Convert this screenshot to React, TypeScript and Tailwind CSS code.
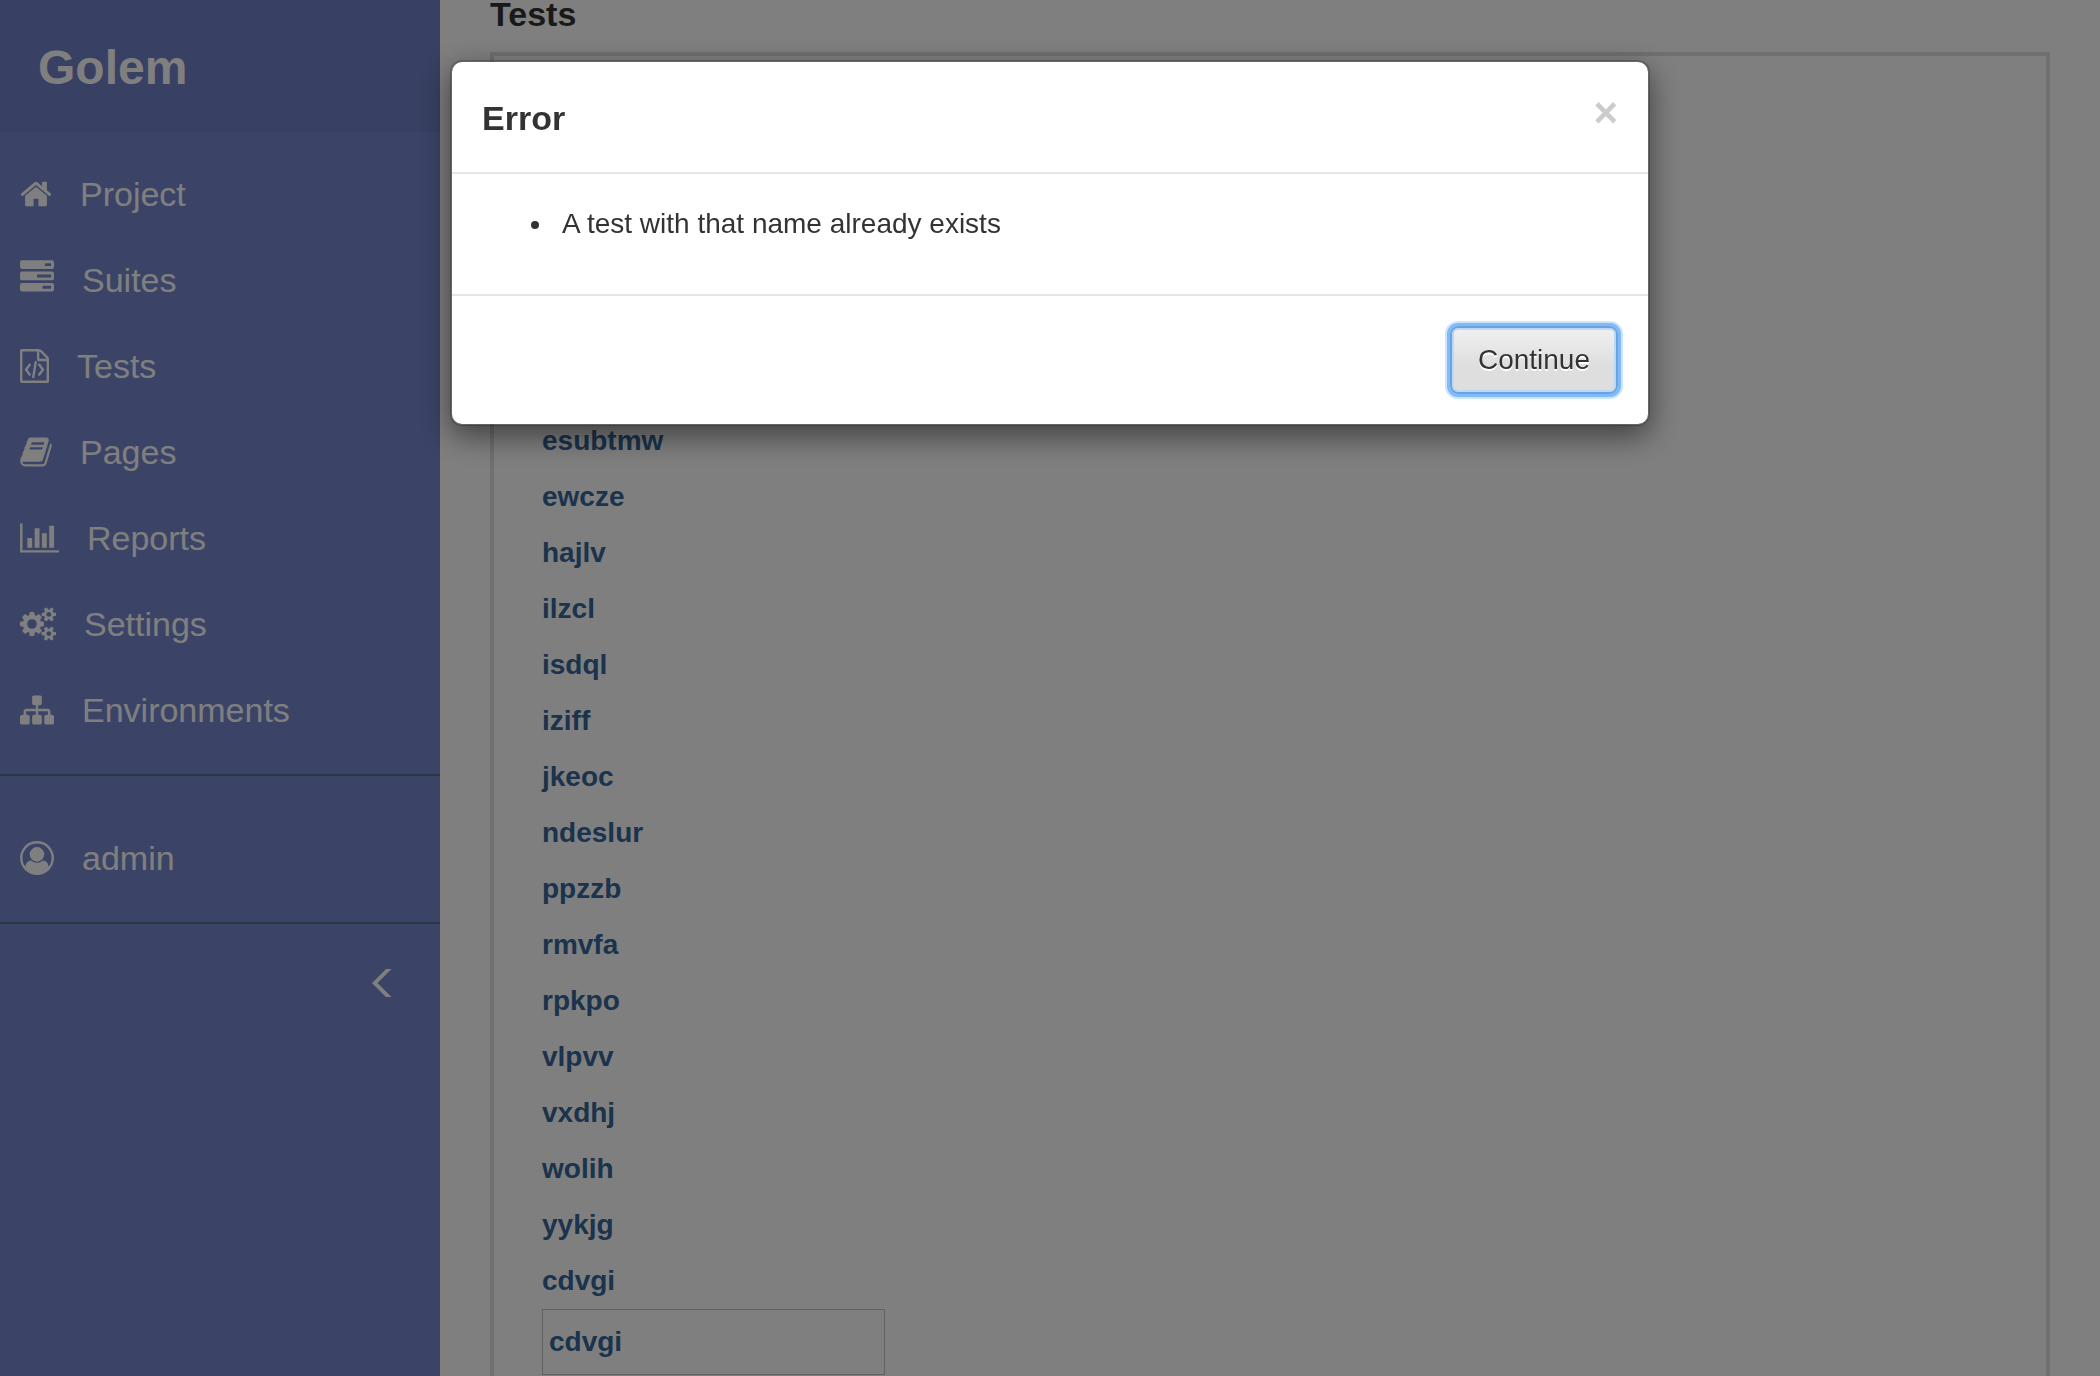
import React from "react";

type Glyph = { box: string; width: string; d: string };

const glyphs: Record<string, Glyph> = {
  home: {
    box: "64 0 1664 1792",
    width: "w-8",
    d: "M1472 992v480q0 26-19 45t-45 19h-384v-384h-256v384h-384q-26 0-45-19t-19-45v-480q0-1 .5-3t.5-3l575-474 575 474q1 2 1 6zm223-69l-62 74q-8 9-21 11h-3q-13 0-21-7l-692-577-692 577q-12 8-24 7-13-2-21-11l-62-74q-8-10-7-23.5t11-21.5l719-599q32-26 76-26t76 26l244 204v-195q0-14 9-23t23-9h192q14 0 23 9t9 23v408l219 182q10 8 11 21.5t-7 23.5z",
  },
  tasks: {
    box: "0 0 34 34",
    width: "w-[34px]",
    d: "M2-2.7h30a2 2 0 0 1 2 2v4.700a2 2 0 0 1-2 2h-30a2 2 0 0 1-2-2v-4.700a2 2 0 0 1 2-2zM25 .2v2.900h6v-2.900zM2 8.600h30a2 2 0 0 1 2 2v4.700a2 2 0 0 1-2 2h-30a2 2 0 0 1-2-2v-4.700a2 2 0 0 1 2-2zM17 11.500v2.900h14v-2.900zM2 19.900h30a2 2 0 0 1 2 2v4.700a2 2 0 0 1-2 2h-30a2 2 0 0 1-2-2v-4.700a2 2 0 0 1 2-2zM22.500 22.800v2.900h8.500v-2.900z",
  },
  code: {
    box: "0 0 1536 1792",
    width: "w-[29px]",
    d: "M1468 380q28 28 48 76t20 88v1152q0 40-28 68t-68 28h-1344q-40 0-68-28t-28-68v-1600q0-40 28-68t68-28h896q40 0 88 20t76 48zm-444-244v376h376q-10-29-22-41l-313-313q-12-12-41-22zm384 1528v-1024h-416q-40 0-68-28t-28-68v-416h-768v1536h1280zM480 768q8-11 21-12.5t24 6.5l51 38q11 8 12.5 21t-6.5 24l-182 243 182 243q8 11 6.5 24t-12.5 21l-51 38q-11 8-24 6.5t-21-12.5l-226-301q-14-19 0-38zm802 301q14 19 0 38l-226 301q-8 11-21 12.5t-24-6.5l-51-38q-11-8-12.5-21t6.5-24l182-243-182-243q-8-11-6.5-24t12.5-21l51-38q11-8 24-6.5t21 12.5zm-620 461q-13-2-20.5-13t-5.5-24l138-831q2-13 13-20.5t24-5.5l63 10q13 2 20.5 13t5.5 24l-138 831q-2 13-13 20.5t-24 5.5z",
  },
  book: {
    box: "64 0 1664 1792",
    width: "w-8",
    d: "M1703 478q40 57 18 129l-275 906q-19 64-76.5 107.5t-122.5 43.5h-923q-77 0-148.5-53.5t-99.5-131.5q-24-67-2-127 0-4 3-27t4-37q1-8-3-21.5t-3-19.5q2-11 8-21t16.5-23.5 16.5-23.5q23-38 45-91.5t30-91.5q3-10 .5-30t-.5-28q3-11 17-28t17-23q21-36 42-92t25-90q1-9-2.5-32t.5-28q4-13 22-30.5t22-22.5q19-26 42.5-84.5t27.5-96.5q1-8-3-25.5t-2-26.5q2-8 9-18t18-23 17-21q8-12 16.5-30.5t15-35 16-36 19.5-32 26.5-23.5 36-11.5 47.5 5.5l-1 3q38-9 51-9h761q74 0 114 56t18 130l-274 906q-36 119-71.5 153.5t-128.5 34.5h-869q-27 0-38 15-11 16-1 43 24 70 144 70h923q29 0 56-15.5t35-41.5l300-987q7-22 5-57 38 15 59 43zm-1064 2q-4 13 2 22.5t20 9.5h608q13 0 25.5-9.5t16.5-22.5l21-64q4-13-2-22.5t-20-9.5h-608q-13 0-25.5 9.5t-16.5 22.5zm-83 256q-4 13 2 22.5t20 9.5h608q13 0 25.5-9.5t16.5-22.5l21-64q4-13-2-22.5t-20-9.5h-608q-13 0-25.5 9.5t-16.5 22.5z",
  },
  chart: {
    box: "0 0 2048 1792",
    width: "w-[39px]",
    d: "M640 896v512h-256v-512h256zm384-512v1024h-256v-1024h256zm1024 1152v128h-2048v-1536h128v1408h1920zm-640-896v768h-256v-768h256zm384-384v1152h-256v-1152h256z",
  },
  cogs: {
    box: "0 0 1920 1792",
    width: "w-9",
    d: "M896 896q0-106-75-181t-181-75-181 75-75 181 75 181 181 75 181-75 75-181zm768 512q0-52-38-90t-90-38-90 38-38 90q0 53 37.5 90.5t90.5 37.5 90.5-37.5 37.5-90.5zm0-1024q0-52-38-90t-90-38-90 38-38 90q0 53 37.5 90.5t90.5 37.5 90.5-37.5 37.5-90.5zm-384 421v185q0 10-7 19.5t-16 10.5l-155 24q-11 35-32 76 34 48 90 115 7 11 7 20 0 12-7 19-23 30-82.5 89.5t-78.5 59.5q-11 0-21-7l-115-90q-37 19-77 31-11 108-23 155-7 24-30 24h-186q-11 0-20-7.5t-10-17.5l-23-153q-34-10-75-31l-118 89q-7 7-20 7-11 0-21-8-144-133-144-160 0-9 7-19 10-14 41-53t47-61q-23-44-35-82l-152-24q-10-1-17-9.5t-7-19.5v-185q0-10 7-19.5t16-10.5l155-24q11-35 32-76-34-48-90-115-7-11-7-20 0-12 7-20 22-30 82-89t79-59q11 0 21 7l115 90q34-18 77-32 11-108 23-154 7-24 30-24h186q11 0 20 7.5t10 17.5l23 153q34 10 75 31l118-89q8-7 20-7 11 0 21 8 144 133 144 160 0 8-7 19-12 16-42 54t-45 60q23 48 34 82l152 23q10 2 17 10.5t7 19.5zm640 533v140q0 16-149 31-12 27-30 52 51 113 51 138 0 4-4 7-122 71-124 71-8 0-46-47t-52-68q-20 2-30 2t-30-2q-14 21-52 68t-46 47q-2 0-124-71-4-3-4-7 0-25 51-138-18-25-30-52-149-15-149-31v-140q0-16 149-31 13-29 30-52-51-113-51-138 0-4 4-7 4-2 35-20t59-34 30-16q8 0 46 46.5t52 67.5q20-2 30-2t30 2q51-71 92-112l6-2q4 0 124 70 4 3 4 7 0 25-51 138 17 23 30 52 149 15 149 31zm0-1024v140q0 16-149 31-12 27-30 52 51 113 51 138 0 4-4 7-122 71-124 71-8 0-46-47t-52-68q-20 2-30 2t-30-2q-14 21-52 68t-46 47q-2 0-124-71-4-3-4-7 0-25 51-138-18-25-30-52-149-15-149-31v-140q0-16 149-31 13-29 30-52-51-113-51-138 0-4 4-7 4-2 35-20t59-34 30-16q8 0 46 46.5t52 67.5q20-2 30-2t30 2q51-71 92-112l6-2q4 0 124 70 4 3 4 7 0 25-51 138 17 23 30 52 149 15 149 31z",
  },
  sitemap: {
    box: "0 0 1792 1792",
    width: "w-[34px]",
    d: "M1792 1248v320q0 40-28 68t-68 28h-320q-40 0-68-28t-28-68v-320q0-40 28-68t68-28h96v-192h-512v192h96q40 0 68 28t28 68v320q0 40-28 68t-68 28h-320q-40 0-68-28t-28-68v-320q0-40 28-68t68-28h96v-192h-512v192h96q40 0 68 28t28 68v320q0 40-28 68t-68 28h-320q-40 0-68-28t-28-68v-320q0-40 28-68t68-28h96v-192q0-52 38-90t90-38h512v-192h-96q-40 0-68-28t-28-68v-320q0-40 28-68t68-28h320q40 0 68 28t28 68v320q0 40-28 68t-68 28h-96v192h512q52 0 90 38t38 90v192h96q40 0 68 28t28 68z",
  },
  user: {
    box: "0 0 1792 1792",
    width: "w-[34px]",
    d: "M896 0q182 0 348 71t286 191 191 286 71 348q0 181-70.5 347t-190.5 286-286 191.5-349 71.5-349-71-285.5-191.5-190.5-286-71-347.5 71-348 191-286 286-191 348-71zm619 1351q149-205 149-455 0-156-61-298t-164-245-245-164-298-61-298 61-245 164-164 245-61 298q0 250 149 455 66-327 306-327 131 128 313 128t313-128q240 0 306 327zm-235-647q0-159-112.5-271.5t-271.5-112.5-271.5 112.5-112.5 271.5 112.5 271.5 271.5 112.5 271.5-112.5 112.5-271.5z",
  },
};

const navItems = [
  { icon: "home", label: "Project" },
  { icon: "tasks", label: "Suites" },
  { icon: "code", label: "Tests" },
  { icon: "book", label: "Pages" },
  { icon: "chart", label: "Reports" },
  { icon: "cogs", label: "Settings" },
  { icon: "sitemap", label: "Environments" },
];

const tests = [
  "esubtmw", "ewcze", "hajlv", "ilzcl", "isdql", "iziff", "jkeoc", "ndeslur",
  "ppzzb", "rmvfa", "rpkpo", "vlpvv", "vxdhj", "wolih", "yykjg", "cdvgi",
];

function NavLink({ icon, label }: { icon: string; label: string }) {
  const glyph = glyphs[icon];
  return (
    <li>
      <a href="#" className="flex h-[86px] items-center gap-7 pl-5 text-[34px] text-white">
        <svg
          viewBox={glyph.box}
          className={`h-[34px] shrink-0 overflow-visible ${glyph.width}`}
          fill="currentColor"
          fillRule={icon === "tasks" ? "evenodd" : "nonzero"}
          aria-hidden="true"
        >
          <path d={glyph.d} />
        </svg>
        <span>{label}</span>
      </a>
    </li>
  );
}

function Sidebar() {
  return (
    <aside className="w-[440px] shrink-0 bg-[#7688ce]">
      <div className="flex h-[132px] items-center bg-[#7080c6] pt-1 pl-[38px]">
        <a href="#" className="text-[48px] leading-[56px] font-bold text-white">
          Golem
        </a>
      </div>
      <ul className="border-b-2 border-[#4c748c] pt-[19px] pb-[21px]">
        {navItems.map((item) => (
          <NavLink key={item.label} icon={item.icon} label={item.label} />
        ))}
      </ul>
      <ul className="border-b-2 border-[#4c748c] pt-[39px] pb-[21px]">
        <NavLink icon="user" label="admin" />
      </ul>
      <div className="flex justify-end pt-[45px] pr-12">
        <button type="button" aria-label="Collapse sidebar" className="text-white">
          <svg viewBox="0 0 20 28" className="h-7 w-5" fill="currentColor" aria-hidden="true">
            <path d="M0 14 14 0h5.500L5.500 14l14 14H14z" />
          </svg>
        </button>
      </div>
    </aside>
  );
}

function TestList() {
  return (
    <main className="min-w-0 flex-1 px-[50px]">
      <h3 className="mb-6 text-[34px] leading-7 font-bold text-[#333]">Tests</h3>
      <div className="border-4 border-[#e0e0e0] px-12 pt-[357px] pb-20">
        <ul className="text-[28px] leading-[56px] font-bold">
          {tests.map((name) => (
            <li key={name}>
              <a href="#" className="text-[#366698]">{name}</a>
            </li>
          ))}
        </ul>
        <input
          aria-label="Test name"
          defaultValue="cdvgi"
          className="block h-[66px] w-[343px] border border-[#c4c4c4] bg-white px-1.5 text-[28px] font-bold text-[#366698]"
        />
      </div>
    </main>
  );
}

function ErrorDialog() {
  return (
    <div className="fixed inset-0 flex items-start justify-center bg-black/50 pt-[60px]">
      <div
        role="dialog"
        aria-modal="true"
        aria-labelledby="error-title"
        className="w-[1200px] max-w-full rounded-xl border-2 border-black/20 bg-white bg-clip-padding text-[#333] shadow-[0_10px_30px_rgba(0,0,0,0.5)]"
      >
        <div className="flex items-start justify-between border-b-2 border-[#e5e5e5] px-[30px] pt-[30px] pb-7">
          <h4 id="error-title" className="text-[34px] leading-[52px] font-bold">
            Error
          </h4>
          <button type="button" aria-label="Close" className="text-[42px] leading-[42px] font-bold text-[#ccc]">
            ×
          </button>
        </div>
        <ul className="list-disc py-[30px] pr-[30px] pl-[102px] text-[28px] leading-10">
          <li className="mb-5 pl-2">A test with that name already exists</li>
        </ul>
        <div className="flex justify-end border-t-2 border-[#e5e5e5] p-[30px]">
          <button
            type="button"
            className="h-[68px] rounded-lg border-2 border-[#6ba3e0] bg-linear-to-b from-[#f0f0f0] to-[#dedede] to-60% px-[26px] text-[28px] [box-shadow:inset_0_0_0_2px_#bcd8f4,0_0_0_3px_#7fbaf9,0_0_0_5px_#cde5ff] [text-shadow:0_2px_0_#fff]"
          >
            Continue
          </button>
        </div>
      </div>
    </div>
  );
}

export default function App() {
  return (
    <div className="flex h-screen overflow-hidden bg-white font-['Liberation_Sans',Arial,sans-serif]">
      <Sidebar />
      <TestList />
      <ErrorDialog />
    </div>
  );
}
